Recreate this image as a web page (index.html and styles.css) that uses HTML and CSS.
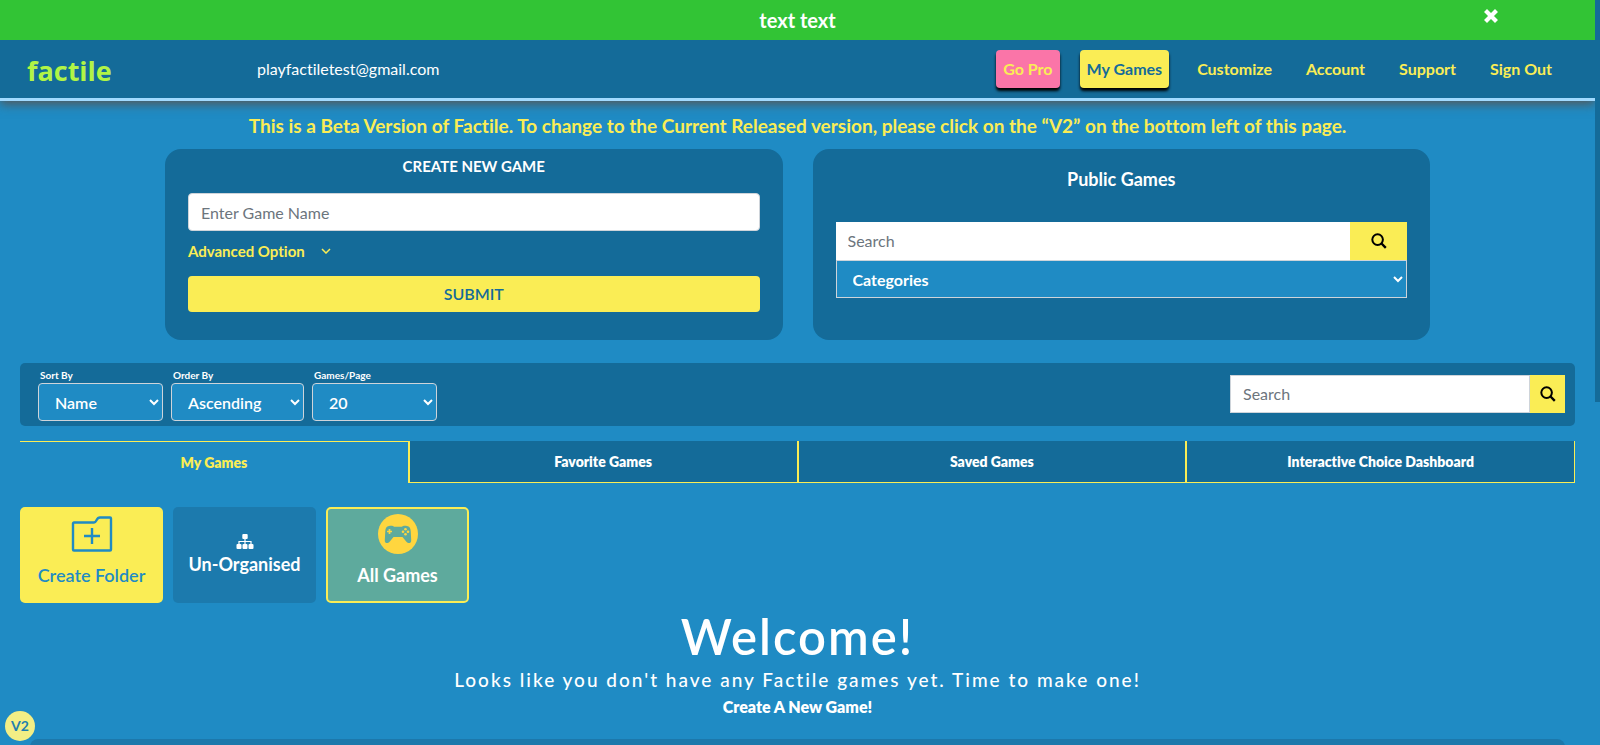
FILE: index.html
```html
<!DOCTYPE html>
<html lang="en">
<head>
<meta charset="utf-8">
<meta name="viewport" content="width=device-width, initial-scale=1">
<title>Factile - My Games</title>
<link rel="stylesheet" href="styles.css">
</head>
<body>
<div class="shell">
  <div class="page">
    <div class="notice">
      <span class="notice-text">text text</span>
      <button class="notice-close" type="button" aria-label="Close">
        <svg viewBox="0 0 14 14" width="14" height="14"><path d="M3 3l8 8M11 3l-8 8" stroke="currentColor" stroke-width="4.2" stroke-linecap="square"/></svg>
      </button>
    </div>
    <header class="topbar">
      <a class="logo" href="#">factile</a>
      <span class="email">playfactiletest@gmail.com</span>
      <nav class="nav">
        <a class="nav-button nav-pro" href="#">Go Pro</a>
        <a class="nav-button nav-current" href="#">My Games</a>
        <a class="nav-link" href="#">Customize</a>
        <a class="nav-link" href="#">Account</a>
        <a class="nav-link" href="#">Support</a>
        <a class="nav-link" href="#">Sign Out</a>
      </nav>
    </header>
    <main class="content">
      <p class="beta">This is a Beta Version of Factile. To change to the Current Released version, please click on the “V2” on the bottom left of this page.</p>
      <div class="cards">
        <form class="card">
          <h2 class="card-title card-title-caps">CREATE NEW GAME</h2>
          <input class="field" type="text" aria-label="Game name" placeholder="Enter Game Name">
          <button class="advanced" type="button">Advanced Option
            <svg viewBox="0 0 10 6" width="10" height="6"><path d="M1 1l4 4 4-4" fill="none" stroke="currentColor" stroke-width="1.5"/></svg>
          </button>
          <button class="submit" type="button">SUBMIT</button>
        </form>
        <form class="card card-public">
          <h2 class="card-title">Public Games</h2>
          <div class="search">
            <input class="search-field" type="text" aria-label="Search public games" placeholder="Search">
            <button class="search-button search-button-wide" type="button" aria-label="Search">
              <svg viewBox="0 0 16 16" width="16" height="16"><circle cx="6.6" cy="6.6" r="5.3" fill="none" stroke="currentColor" stroke-width="2"/><path d="M10.5 10.5l4.3 4.3" stroke="currentColor" stroke-width="2.4"/></svg>
            </button>
          </div>
          <select class="select select-square" aria-label="Categories"><option>Categories</option></select>
        </form>
      </div>
      <div class="toolbar">
        <div class="filter"><label class="filter-label" for="sort">Sort By</label><select class="select" id="sort"><option>Name</option></select></div>
        <div class="filter filter-order"><label class="filter-label" for="order">Order By</label><select class="select" id="order"><option>Ascending</option></select></div>
        <div class="filter"><label class="filter-label" for="count">Games/Page</label><select class="select" id="count"><option>20</option></select></div>
        <div class="search toolbar-search">
          <input class="search-field" type="text" aria-label="Search my games" placeholder="Search">
          <button class="search-button" type="button" aria-label="Search">
            <svg viewBox="0 0 16 16" width="16" height="16"><circle cx="6.6" cy="6.6" r="5.3" fill="none" stroke="currentColor" stroke-width="2"/><path d="M10.5 10.5l4.3 4.3" stroke="currentColor" stroke-width="2.4"/></svg>
          </button>
        </div>
      </div>
      <nav class="tabs">
        <a class="tab tab-active" href="#">My Games</a>
        <a class="tab" href="#">Favorite Games</a>
        <a class="tab" href="#">Saved Games</a>
        <a class="tab" href="#">Interactive Choice Dashboard</a>
      </nav>
      <div class="folders">
        <button class="folder folder-create" type="button">
          <svg viewBox="0 0 42 42" width="42" height="42"><path d="M3 9.500h20c3 0 2-5 6-5h10a1 1 0 0 1 1 1v31a1 1 0 0 1-1 1H3a1 1 0 0 1-1-1v-26a1 1 0 0 1 1-1z" fill="none" stroke="currentColor" stroke-width="2.400"/><path d="M21 15v16M13 23h16" stroke="currentColor" stroke-width="2.400"/></svg>
          Create Folder
        </button>
        <button class="folder folder-plain" type="button">
          <svg viewBox="0 0 18 15" width="18" height="15" fill="currentColor"><rect x="6.300" y="0" width="5.400" height="5" rx="1"/><rect x="0.500" y="10" width="5" height="5" rx="1"/><rect x="6.500" y="10" width="5" height="5" rx="1"/><rect x="12.500" y="10" width="5" height="5" rx="1"/><path d="M9 4v7M3 11V7.500h12V11" fill="none" stroke="currentColor" stroke-width="1.200"/></svg>
          Un-Organised
        </button>
        <button class="folder folder-all" type="button">
          <svg viewBox="0 0 42 42" width="42" height="42"><circle cx="21" cy="21" r="20" fill="#ffd63f"/><path d="M12 13c2-.5 4-.5 5 .8h8c1-1.300 3-1.300 5-.8 2.500.6 3.500 2 3.700 5l.5 9c.2 4-3 3.700-5 1.500L25.500 24h-9l-3.700 4.500c-2 2.200-5.200 2.500-5-1.500l.5-9c.2-3 1.200-4.400 3.700-5z" fill="#5eaa9d"/><path d="M12.500 16v5M10 18.500h5" stroke="#ffd63f" stroke-width="1.700"/><g fill="#ffd63f"><circle cx="28.500" cy="16.200" r="1.300"/><circle cx="28.500" cy="21.200" r="1.300"/><circle cx="26" cy="18.700" r="1.300"/><circle cx="31" cy="18.700" r="1.300"/></g></svg>
          All Games
        </button>
      </div>
      <section class="welcome">
        <h1 class="welcome-title">Welcome!</h1>
        <p class="welcome-text">Looks like you don't have any Factile games yet. Time to make one!</p>
        <a class="welcome-link" href="#">Create A New Game!</a>
      </section>
      <div class="panel"></div>
    </main>
  </div>
  <div class="rail"><div class="rail-thumb"></div></div>
  <button class="version" type="button">V2</button>
</div>
</body>
</html>
```

FILE: styles.css
```css
* { box-sizing: border-box; }
body {
  margin: 0;
  background: #1f8bc4;
  color: #fff;
  font: 16px/24px Lato, "Open Sans", sans-serif;
  font-variant-ligatures: none;
}
a { color: inherit; text-decoration: none; }
button, input, select { font: inherit; font-variant-ligatures: none; margin: 0; }
button { border: 0; cursor: pointer; }
svg { display: block; flex: none; }

.shell { display: flex; height: 100vh; overflow: hidden; }
.page { flex: 1; min-width: 0; }
.rail { width: 5px; }
.rail-thumb { height: 54%; background: #146b99; }

.notice {
  position: relative;
  display: flex;
  justify-content: center;
  align-items: center;
  height: 40px;
  background: #32c435;
  font-size: 20px;
  font-weight: 700;
}
.notice-close { position: absolute; top: 9px; right: 97px; padding: 0; background: none; color: #fff; }

.topbar {
  display: flex;
  align-items: center;
  height: 61px;
  padding: 0 35px 0 27px;
  background: #146b99;
  border-bottom: 3px solid #a1daff;
  box-shadow: 0 3px 10px #555;
}
.logo { width: 230px; padding-top: 3px; color: #b1f446; font: 700 27px/32px "Open Sans", sans-serif; }
.nav { display: flex; align-items: center; margin-left: auto; font-weight: 700; color: #faed55; }
.nav-button { padding: 7px; line-height: 24px; border-radius: 4px; box-shadow: 0 3px 3px #000; margin-right: 20px; }
.nav-pro { background: #fa75a8; }
.nav-current { background: #faed55; color: #146b99; }
.nav-link { padding: 7px 8px; margin-right: 18px; }
.nav-link:last-child { margin-right: 0; }

.content { padding: 13px 20px 0; }
.beta { margin: 0; text-align: center; font-size: 19px; font-weight: 700; color: #faed55; }

.cards { display: grid; grid-template-columns: 1fr 1fr; gap: 30px; margin: 11px 145px 0; }
.card { display: flex; flex-direction: column; padding: 5px 23px 28px; border-radius: 16px; background: #146b99; }
.card-public { padding: 18px 23px 42px; }
.card-title { margin: 0; text-align: center; font-size: 18px; line-height: 24px; font-weight: 700; }
.card-title-caps { font-size: 15px; }
.field {
  width: 100%;
  height: 38px;
  margin-top: 15px;
  padding: 6px 12px;
  border: 1px solid #ced4da;
  border-radius: 4px;
  background: #fff;
}
.field::placeholder, .search-field::placeholder { color: #6c757d; opacity: 1; }
.advanced {
  display: flex;
  align-items: center;
  align-self: flex-start;
  gap: 16px;
  margin-top: 8px;
  padding: 0;
  background: none;
  color: #faed55;
  font-size: 15px;
  font-weight: 700;
}
.submit { height: 36px; margin-top: 13px; padding: 0; border-radius: 4px; background: #faed55; color: #146b99; font-weight: 600; }

.search { display: flex; height: 38px; }
.card-public .search { margin-top: 31px; }
.search-field { flex: 1; min-width: 0; padding: 6px 12px; border: 0; background: #fff; border-radius: 0; }
.toolbar-search .search-field { border: 1px solid #ced4da; }
.search-button { display: flex; justify-content: center; align-items: center; width: 35px; padding: 0; background: #faed55; color: #000; }
.search-button-wide { width: 57px; }
.select {
  width: 100%;
  height: 38px;
  padding: 6px 0 6px 12px;
  border: 1px solid #ced4da;
  border-radius: 4px;
  background: #1f8bc4;
  color: #fff;
  font-weight: 600;
}
.select-square { border-radius: 0; font-weight: 700; }

.toolbar {
  display: flex;
  align-items: center;
  gap: 8px;
  margin-top: 23px;
  padding: 5px 10px 5px 18px;
  border-radius: 5px;
  background: #146b99;
}
.filter { width: 125px; }
.filter-order { width: 133px; }
.filter-label { display: block; padding-left: 2px; font-size: 10px; line-height: 15px; font-weight: 700; }
.toolbar-search { width: 335px; margin: 0 0 1px auto; }

.tabs { display: grid; grid-template-columns: repeat(4, 1fr); margin-top: 15px; }
.tab {
  height: 42px;
  background: #146b99;
  border: 1px solid #faed55;
  border-top: 0;
  text-align: center;
  font-size: 14px;
  line-height: 42px;
  font-weight: 800;
}
.tab-active { background: none; color: #faed55; border-width: 1px 1px 0 0; border-top: 1px solid #faed55; }

.folders { display: flex; gap: 10px; margin-top: 24px; }
.folder {
  display: flex;
  flex-direction: column;
  align-items: center;
  width: 143px;
  height: 96px;
  padding: 6px 0 0;
  gap: 8px;
  border-radius: 5px;
  font-size: 18px;
  font-weight: 600;
  color: #fff;
}
.folder-create { background: #faed55; color: #1f8bc4; }
.folder-plain { justify-content: center; gap: 3px; padding: 0; background: #1c7aad; font-weight: 700; }
.folder-all { padding-top: 4px; border: 2px solid #faed55; background: #5eaa9d; font-weight: 700; }

.welcome { display: flex; flex-direction: column; align-items: center; margin-top: 4px; }
.welcome-title { margin: 0; font-size: 49px; line-height: 58px; font-weight: 600; letter-spacing: 2px; }
.welcome-text { margin: 3px 0 0; font-size: 19px; line-height: 24px; font-weight: 500; letter-spacing: 2px; }
.welcome-link { margin-top: 3px; font-weight: 800; }
.panel { height: 60px; margin: 20px 10px 0; border-radius: 8px; background: #1c78ab; }

.version {
  position: fixed;
  left: 5px;
  bottom: 4px;
  width: 30px;
  height: 30px;
  padding: 0;
  border-radius: 50%;
  background: #f3ee85;
  color: #1f7fae;
  font-size: 14px;
  font-weight: 700;
}
```
